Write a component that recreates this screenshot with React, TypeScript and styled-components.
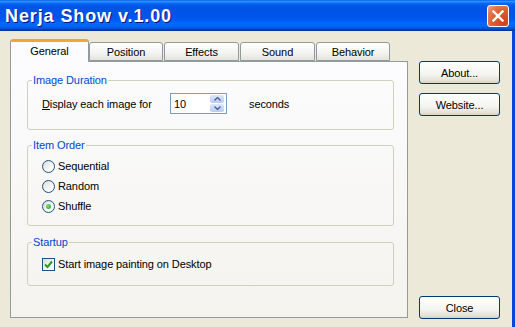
import styled, { createGlobalStyle } from 'styled-components';

const GlobalStyle = createGlobalStyle`
  html, body {
    margin: 0;
    padding: 0;
    background: #ece9d8;
  }
  body {
    font-family: "Liberation Sans", Arial, sans-serif;
    font-size: 11px;
    letter-spacing: -0.1px;
    color: #000;
  }
  * { box-sizing: border-box; }
`;

// --- Dados ---
const tabs = [
  { label: 'General', width: 79, gap: 0, active: true },
  { label: 'Position', width: 74, gap: 0, active: false },
  { label: 'Effects', width: 75, gap: 1, active: false },
  { label: 'Sound', width: 75, gap: 1, active: false },
  { label: 'Behavior', width: 74, gap: 1, active: false },
];

const orderOptions = [
  { label: 'Sequential', checked: false },
  { label: 'Random', checked: false },
  { label: 'Shuffle', checked: true },
];

// --- Janela ---
const Window = styled.div`
  width: 515px;
  height: 327px;
  overflow: hidden;
  display: flex;
  flex-direction: column;
`;

const TitleBar = styled.div`
  height: 31px;
  flex-shrink: 0;
  display: flex;
  align-items: center;
  justify-content: space-between;
  padding: 0 6px 0 5px;
  background: linear-gradient(
    to bottom,
    #0058ee 0%,
    #3593ff 4%,
    #288eff 6%,
    #127dff 8%,
    #036ffc 10%,
    #0262ee 14%,
    #0057e5 20%,
    #0054e3 24%,
    #0055eb 56%,
    #005bf5 66%,
    #026afe 76%,
    #0062ef 86%,
    #0052d6 92%,
    #0040ab 96%,
    #003092 100%
  );
`;

const Title = styled.div`
  color: #fff;
  font-weight: bold;
  font-size: 18px;
  letter-spacing: 0.9px;
  text-shadow: 1px 1px #0f1089;
  padding-top: 1px;
`;

const CloseButton = styled.div`
  width: 22px;
  height: 22px;
  border: 1px solid #fff;
  border-radius: 3px;
  display: flex;
  align-items: center;
  justify-content: center;
  background: radial-gradient(circle at 85% 85%, #c9461f 0%, #de5a2e 50%, #e87650 75%, #f3a58a 100%);
`;

const Body = styled.div`
  flex: 1;
  display: flex;
  background: #ece9d8;
  border-right: 3px solid #0845d8;
  padding: 8px 0 0 10px;
`;

// --- Abas ---
const TabControl = styled.div`
  width: 398px;
  display: flex;
  flex-direction: column;
`;

const TabStrip = styled.div`
  height: 22px;
  display: flex;
  align-items: flex-end;
  position: relative;
  z-index: 1;
`;

const Tab = styled.div<{ $active: boolean; $width: number; $gap: number }>`
  width: ${(p) => p.$width}px;
  margin-left: ${(p) => p.$gap}px;
  height: ${(p) => (p.$active ? 23 : 19)}px;
  margin-bottom: ${(p) => (p.$active ? -1 : 0)}px;
  display: flex;
  align-items: center;
  justify-content: center;
  border: 1px solid #919b9c;
  border-bottom: ${(p) => (p.$active ? 'none' : '1px solid #919b9c')};
  border-top: ${(p) => (p.$active ? '3px solid #f2a53c' : '1px solid #919b9c')};
  border-radius: 3px 3px 0 0;
  background: ${(p) =>
    p.$active ? '#fcfcfe' : 'linear-gradient(to bottom, #ffffff 0%, #f3f3ef 60%, #e4e2da 100%)'};
  padding-bottom: ${(p) => (p.$active ? 2 : 0)}px;
`;

const Panel = styled.div`
  height: 257px;
  border: 1px solid #919b9c;
  background: linear-gradient(to bottom, #fcfcfe 0%, #f4f3ee 100%);
  padding: 12px 13px 0 16px;
  display: flex;
  flex-direction: column;
`;

// --- Grupos ---
const GroupBox = styled.fieldset<{ $mt: number }>`
  margin: ${(p) => p.$mt}px 0 0;
  padding: 0;
  border: 1px solid #d0d0bf;
  border-radius: 3px;
  min-width: 0;
`;

const Legend = styled.legend`
  margin-left: 4px;
  padding: 0 1px;
  color: #0046d5;
  font-size: 11px;
  line-height: 13px;
`;

const GroupContent = styled.div<{ $pt: number; $pb: number }>`
  padding: ${(p) => p.$pt}px 14px ${(p) => p.$pb}px;
`;

const Row = styled.div<{ $h: number }>`
  height: ${(p) => p.$h}px;
  display: flex;
  align-items: center;
`;

const FieldLabel = styled.span`
  width: 128px;
`;

const SpinBox = styled.div`
  width: 57px;
  height: 21px;
  border: 1px solid #7f9db9;
  background: #fff;
  display: flex;
  align-items: center;
  justify-content: space-between;
  padding: 1px 2px 1px 3px;
`;

const SpinButtons = styled.div`
  width: 14px;
  height: 17px;
  display: flex;
  flex-direction: column;
  gap: 1px;
`;

const SpinButton = styled.div`
  flex: 1;
  border-radius: 2px;
  background: linear-gradient(to bottom, #dde6fb, #b9cbf3);
  display: flex;
  align-items: center;
  justify-content: center;
`;

const Units = styled.span`
  margin-left: 22px;
`;

const Radio = styled.span<{ $checked: boolean }>`
  width: 13px;
  height: 13px;
  border-radius: 50%;
  border: 1px solid #1c5180;
  background: linear-gradient(135deg, #dcdcd4 0%, #ffffff 80%);
  display: flex;
  align-items: center;
  justify-content: center;
  margin-right: 3px;

  &::after {
    content: '';
    display: ${(p) => (p.$checked ? 'block' : 'none')};
    width: 5px;
    height: 5px;
    border-radius: 50%;
    background: radial-gradient(circle at 35% 35%, #7ee07a, #21a121);
  }
`;

const CheckBox = styled.span`
  width: 13px;
  height: 13px;
  border: 1px solid #1c5180;
  background: linear-gradient(135deg, #dcdcd4 0%, #ffffff 80%);
  display: flex;
  align-items: center;
  justify-content: center;
  margin-right: 3px;
`;

// --- Botões ---
const ButtonColumn = styled.div`
  width: 81px;
  height: 280px;
  margin-left: 11px;
  padding-top: 22px;
  display: flex;
  flex-direction: column;
  gap: 9px;
`;

const Button = styled.div<{ $bottom?: boolean }>`
  height: 23px;
  border: 1px solid #003c74;
  border-radius: 3px;
  background: linear-gradient(to bottom, #ffffff 0%, #f4f4f0 60%, #e3e0d6 90%, #d6d0c5 100%);
  display: flex;
  align-items: center;
  justify-content: center;
  margin-top: ${(p) => (p.$bottom ? 'auto' : '0')};
`;

export default function App() {
  return (
    <>
      <GlobalStyle />
      <Window>
        <TitleBar>
          <Title>Nerja Show v.1.00</Title>
          <CloseButton>
            <svg width="12" height="12" viewBox="0 0 12 12">
              <path d="M1.5 1.5 L10.5 10.5 M10.5 1.5 L1.5 10.5" stroke="#fff" strokeWidth="2.4" strokeLinecap="square" />
            </svg>
          </CloseButton>
        </TitleBar>
        <Body>
          <TabControl>
            <TabStrip>
              {tabs.map((t) => (
                <Tab key={t.label} $active={t.active} $width={t.width} $gap={t.gap}>
                  {t.label}
                </Tab>
              ))}
            </TabStrip>
            <Panel>
              <GroupBox $mt={0}>
                <Legend>Image Duration</Legend>
                <GroupContent $pt={6} $pb={15}>
                  <Row $h={21}>
                    <FieldLabel>
                      <u>D</u>isplay each image for
                    </FieldLabel>
                    <SpinBox>
                      <span>10</span>
                      <SpinButtons>
                        <SpinButton>
                          <svg width="7" height="4" viewBox="0 0 7 4">
                            <path d="M0.5 3.5 L3.5 0.5 L6.5 3.5" stroke="#4d6185" strokeWidth="1.4" fill="none" />
                          </svg>
                        </SpinButton>
                        <SpinButton>
                          <svg width="7" height="4" viewBox="0 0 7 4">
                            <path d="M0.5 0.5 L3.5 3.5 L6.5 0.5" stroke="#4d6185" strokeWidth="1.4" fill="none" />
                          </svg>
                        </SpinButton>
                      </SpinButtons>
                    </SpinBox>
                    <Units>seconds</Units>
                  </Row>
                </GroupContent>
              </GroupBox>

              <GroupBox $mt={9}>
                <Legend>Item Order</Legend>
                <GroupContent $pt={4} $pb={9}>
                  {orderOptions.map((o) => (
                    <Row $h={20} key={o.label}>
                      <Radio $checked={o.checked} />
                      {o.label}
                    </Row>
                  ))}
                </GroupContent>
              </GroupBox>

              <GroupBox $mt={10}>
                <Legend>Startup</Legend>
                <GroupContent $pt={5} $pb={11}>
                  <Row $h={20}>
                    <CheckBox>
                      <svg width="9" height="9" viewBox="0 0 9 9">
                        <path d="M1 4.5 L3.5 7 L8 1.5" stroke="#21a121" strokeWidth="2" fill="none" />
                      </svg>
                    </CheckBox>
                    Start image painting on Desktop
                  </Row>
                </GroupContent>
              </GroupBox>
            </Panel>
          </TabControl>

          <ButtonColumn>
            <Button>About...</Button>
            <Button>Website...</Button>
            <Button $bottom>Close</Button>
          </ButtonColumn>
        </Body>
      </Window>
    </>
  );
}
